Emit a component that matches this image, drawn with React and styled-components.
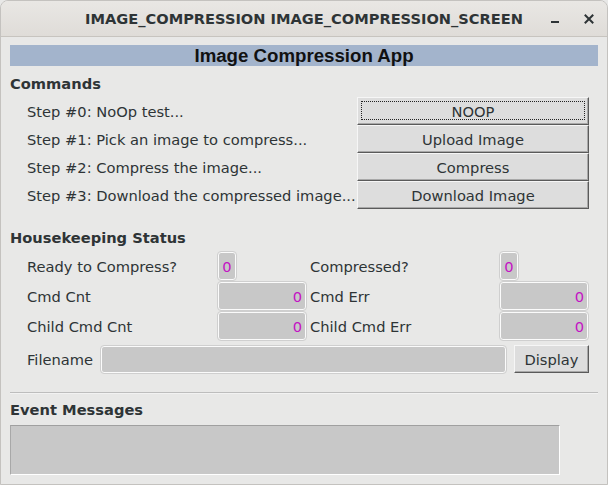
import React from "react";
import styled, { createGlobalStyle } from "styled-components";

const GlobalStyle = createGlobalStyle`
  html, body { margin: 0; padding: 0; background: #e8e8e7; }
  body { font-family: "DejaVu Sans", "Liberation Sans", sans-serif; }
  * { box-sizing: border-box; }
`;

const Window = styled.div`
  width: 608px;
  height: 485px;
  display: flex;
  flex-direction: column;
  background: #e8e8e7;
  border: 1px solid #c4c2bf;
  border-top-left-radius: 8px;
  border-top-right-radius: 8px;
  overflow: hidden;
`;

const TitleBar = styled.div`
  height: 36px;
  flex: none;
  display: grid;
  grid-template-columns: 1fr auto 1fr;
  align-items: center;
  background: linear-gradient(#e9e7e4, #dfdcd8);
  border-bottom: 1px solid #c7c4bf;
`;

const TitleText = styled.div`
  grid-column: 2;
  font-weight: bold;
  font-size: 14.6px;
  color: #2e3436;
  white-space: nowrap;
`;

const TitleButtons = styled.div`
  grid-column: 3;
  justify-self: end;
  display: flex;
  align-items: center;
  gap: 25px;
  padding-right: 13px;
`;

const TitleButton = styled.span`
  display: flex;
  align-items: center;
  justify-content: center;
  height: 16px;
`;

const Content = styled.div`
  flex: 1;
  display: flex;
  flex-direction: column;
  padding: 8px 9px 0 9px;
  color: #2e3436;
  font-size: 14.67px;
`;

const Banner = styled.div`
  height: 21px;
  background: #a3b4cc;
  display: flex;
  align-items: center;
  justify-content: center;
  font-family: "Liberation Sans", Arial, sans-serif;
  font-weight: bold;
  font-size: 18.67px;
  color: #111;
`;

const SectionTitle = styled.div`
  height: 20px;
  line-height: 20px;
  font-weight: bold;
  font-size: 14.67px;
  color: #2e3436;
  margin-top: ${(p) => p.$top}px;
`;

const CommandList = styled.div`
  margin-top: 3px;
  display: flex;
  flex-direction: column;
`;

const CommandRow = styled.div`
  display: grid;
  grid-template-columns: 330px 232px;
  padding-left: 17px;
  height: 28px;
  align-items: center;
`;

const Label = styled.span`
  white-space: nowrap;
  color: #2e3436;
`;

const PushButton = styled.button`
  height: ${(p) => p.$h || 28}px;
  width: 100%;
  font-family: "DejaVu Sans", sans-serif;
  font-size: 14.67px;
  color: #2e3436;
  background: #dddddd;
  border: 1px solid;
  border-color: #f6f6f6 #5a5a5a #5a5a5a #f6f6f6;
  box-shadow: inset -1px -1px 0 #a8a8a8;
  padding: 0;
  position: relative;
  cursor: default;
  &::after {
    content: "";
    display: ${(p) => (p.$focused ? "block" : "none")};
    position: absolute;
    inset: 3px 3px 4px 3px;
    border: 1px dotted #222;
  }
`;

const StatusGrid = styled.div`
  margin-top: 4px;
  display: grid;
  grid-template-columns: 191px 88px 194px 88px;
  grid-auto-rows: 28px;
  row-gap: 2px;
  padding-left: 17px;
  align-items: center;
`;

const SecondLabel = styled(Label)`
  padding-left: 4px;
`;

const ValueBox = styled.div`
  height: 28px;
  width: ${(p) => (p.$narrow ? "18px" : "100%")};
  background: #c8c8c8;
  border: 1px solid #fbfbfb;
  outline: 1px solid #cfcfcf;
  border-radius: 3px;
  display: flex;
  align-items: center;
  justify-content: ${(p) => (p.$narrow ? "center" : "flex-end")};
  padding: 0 3px;
  color: #c414c4;
  font-size: 14.67px;
`;

const FileRow = styled.div`
  margin-top: 5px;
  display: grid;
  grid-template-columns: 66px 405px 75px;
  column-gap: 8px;
  padding-left: 17px;
  height: 28px;
  align-items: center;
`;

const FileField = styled.div`
  height: 27px;
  background: #c8c8c8;
  border: 1px solid #fbfbfb;
  outline: 1px solid #cfcfcf;
  border-radius: 3px;
`;

const Separator = styled.div`
  margin-top: 19px;
  height: 2px;
  border-top: 1px solid #bdbdbd;
  border-bottom: 1px solid #f2f2f2;
`;

const EventBox = styled.div`
  margin-top: 5px;
  width: 550px;
  height: 50px;
  background: #c8c8c8;
  border-style: solid;
  border-width: 1px;
  border-color: #a0a0a0 #ffffff #ffffff #a8a8a8;
`;

const commands = [
  { label: "Step #0: NoOp test...", button: "NOOP", focused: true },
  { label: "Step #1: Pick an image to compress...", button: "Upload Image" },
  { label: "Step #2: Compress the image...", button: "Compress" },
  { label: "Step #3: Download the compressed image...", button: "Download Image" },
];

const status = [
  ["Ready to Compress?", "0", "Compressed?", "0", true],
  ["Cmd Cnt", "0", "Cmd Err", "0", false],
  ["Child Cmd Cnt", "0", "Child Cmd Err", "0", false],
];

export default function App() {
  return (
    <>
      <GlobalStyle />
      <Window>
        <TitleBar>
          <TitleText>IMAGE_COMPRESSION IMAGE_COMPRESSION_SCREEN</TitleText>
          <TitleButtons>
            <TitleButton>
              <svg width="8" height="16" viewBox="0 0 8 16">
                <rect x="0" y="10" width="8" height="2" fill="#2e3436" />
              </svg>
            </TitleButton>
            <TitleButton>
              <svg width="10" height="16" viewBox="0 0 10 16">
                <path d="M1.5 4.5 L8.5 11.5 M8.5 4.5 L1.5 11.5" stroke="#2e3436" strokeWidth="2" strokeLinecap="square" />
              </svg>
            </TitleButton>
          </TitleButtons>
        </TitleBar>
        <Content>
          <Banner>Image Compression App</Banner>
          <SectionTitle $top={8}>Commands</SectionTitle>
          <CommandList>
            {commands.map((c) => (
              <CommandRow key={c.button}>
                <Label>{c.label}</Label>
                <PushButton $focused={c.focused}>{c.button}</PushButton>
              </CommandRow>
            ))}
          </CommandList>
          <SectionTitle $top={19}>Housekeeping Status</SectionTitle>
          <StatusGrid>
            {status.map(([l1, v1, l2, v2, narrow]) => (
              <React.Fragment key={l1}>
                <Label>{l1}</Label>
                <ValueBox $narrow={narrow}>{v1}</ValueBox>
                <SecondLabel>{l2}</SecondLabel>
                <ValueBox $narrow={narrow}>{v2}</ValueBox>
              </React.Fragment>
            ))}
          </StatusGrid>
          <FileRow>
            <Label>Filename</Label>
            <FileField />
            <PushButton $h={28}>Display</PushButton>
          </FileRow>
          <Separator />
          <SectionTitle $top={6}>Event Messages</SectionTitle>
          <EventBox />
        </Content>
      </Window>
    </>
  );
}
